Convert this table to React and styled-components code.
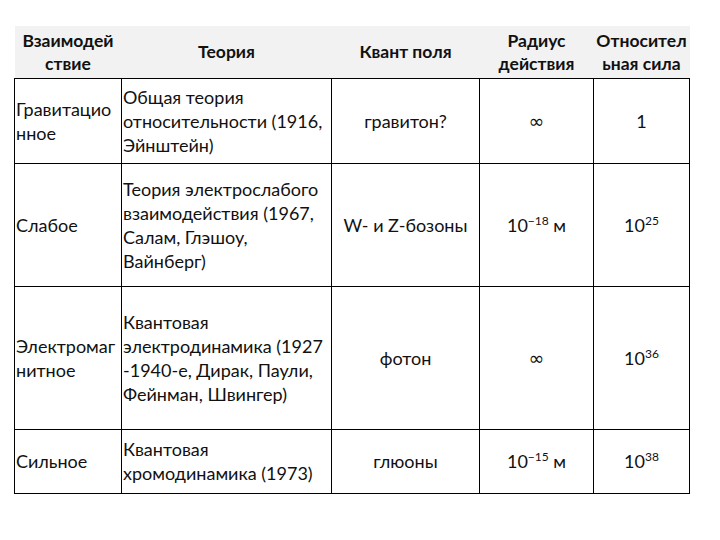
import React from "react";
import styled, { createGlobalStyle } from "styled-components";

const Global = createGlobalStyle`
  html, body { margin: 0; padding: 0; background: #fff; }
  body { font-family: Lato, "Liberation Sans", sans-serif; color: #111; }
`;

const Page = styled.div`
  width: 720px;
  height: 540px;
  padding: 26px 0 0 14px;
  box-sizing: border-box;
`;

const Table = styled.table`
  border-collapse: collapse;
  table-layout: fixed;
  font-size: 18px;
  line-height: 24px;
`;

const HeadRow = styled.tr`
  height: 52px;
  background: #f2f2f2;
`;

const Th = styled.th`
  font-weight: 700;
  font-size: 17.5px;
  line-height: 23px;
  text-align: center;
  vertical-align: middle;
  padding: 0;
  white-space: nowrap;
  color: #111;
`;

const Row = styled.tr`
  height: ${(p) => p.$h}px;
`;

const Td = styled.td`
  border: 1px solid #000;
  padding: 0 ${(p) => (p.$align === "left" ? "1px" : "0")};
  text-align: ${(p) => p.$align || "center"};
  vertical-align: middle;
  white-space: nowrap;
  font-weight: 400;
`;

const Sup = styled.sup`
  font-size: 12px;
  vertical-align: 7px;
  line-height: 0;
`;

const Inf = styled.span`
  font-family: "DejaVu Sans", sans-serif;
  font-size: 19px;
`;

const widths = [107, 210, 148, 114, 96];

const rows = [
  {
    h: 85,
    a: <>Гравитацио<br />нное</>,
    b: <>Общая теория<br />относительности (1916,<br />Эйнштейн)</>,
    c: "гравитон?",
    d: <Inf>∞</Inf>,
    e: "1",
  },
  {
    h: 123,
    a: "Слабое",
    b: <>Теория электрослабого<br />взаимодействия (1967,<br />Салам, Глэшоу,<br />Вайнберг)</>,
    c: "W- и Z-бозоны",
    d: <>10<Sup>−18</Sup> м</>,
    e: <>10<Sup>25</Sup></>,
  },
  {
    h: 143,
    a: <>Электромаг<br />нитное</>,
    b: <>Квантовая<br />электродинамика (1927<br />-1940-е, Дирак, Паули,<br />Фейнман, Швингер)</>,
    c: "фотон",
    d: <Inf>∞</Inf>,
    e: <>10<Sup>36</Sup></>,
  },
  {
    h: 64,
    a: "Сильное",
    b: <>Квантовая<br />хромодинамика (1973)</>,
    c: "глюоны",
    d: <>10<Sup>−15</Sup> м</>,
    e: <>10<Sup>38</Sup></>,
  },
];

export default function App() {
  return (
    <>
      <Global />
      <Page>
        <Table>
          <colgroup>
            {widths.map((w, i) => (
              <col key={i} style={{ width: w }} />
            ))}
          </colgroup>
          <thead>
            <HeadRow>
              <Th>Взаимодей<br />ствие</Th>
              <Th>Теория</Th>
              <Th>Квант поля</Th>
              <Th>Радиус<br />действия</Th>
              <Th>Относител<br />ьная сила</Th>
            </HeadRow>
          </thead>
          <tbody>
            {rows.map((r, i) => (
              <Row key={i} $h={r.h}>
                <Td $align="left">{r.a}</Td>
                <Td $align="left">{r.b}</Td>
                <Td>{r.c}</Td>
                <Td>{r.d}</Td>
                <Td>{r.e}</Td>
              </Row>
            ))}
          </tbody>
        </Table>
      </Page>
    </>
  );
}
